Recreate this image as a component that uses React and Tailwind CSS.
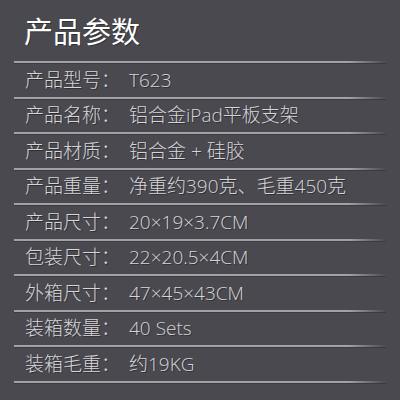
import React from 'react';

const specs = [
  ['产品型号：', 'T623'],
  ['产品名称：', '铝合金iPad平板支架'],
  ['产品材质：', '铝合金 + 硅胶'],
  ['产品重量：', '净重约390克、毛重450克'],
  ['产品尺寸：', '20×19×3.7CM'],
  ['包装尺寸：', '22×20.5×4CM'],
  ['外箱尺寸：', '47×45×43CM'],
  ['装箱数量：', '40 Sets'],
  ['装箱毛重：', '约19KG'],
];

const Divider = () => (
  <div className="ml-[14px] mr-[14px] h-[2px] bg-gradient-to-r from-[#a2a2a6] from-90% to-transparent shadow-[0_1px_0_#3c3b41]" />
);

export default function App() {
  return (
    <div
      className="w-[400px] h-[400px] overflow-hidden bg-[#4a4950] text-[#d6d6d8] [text-shadow:1px_1px_0_rgba(0,0,0,0.35)]"
      style={{ fontFamily: '"Open Sans", "Noto Sans CJK SC", sans-serif' }}
    >
      {/* Title */}
      <div className="h-[61px] pl-[24px] pt-[12px]">
        <h1 className="text-[29px] leading-[40px] font-normal text-white">产品参数</h1>
      </div>

      {specs.map(([label, value]) => (
        <div key={label}>
          <Divider />
          <div className="h-[33.5px] flex items-center pl-[25px] text-[19px] font-light">
            <span className="w-[104px] shrink-0">{label}</span>
            <span>{value}</span>
          </div>
        </div>
      ))}
      <Divider />
    </div>
  );
}
